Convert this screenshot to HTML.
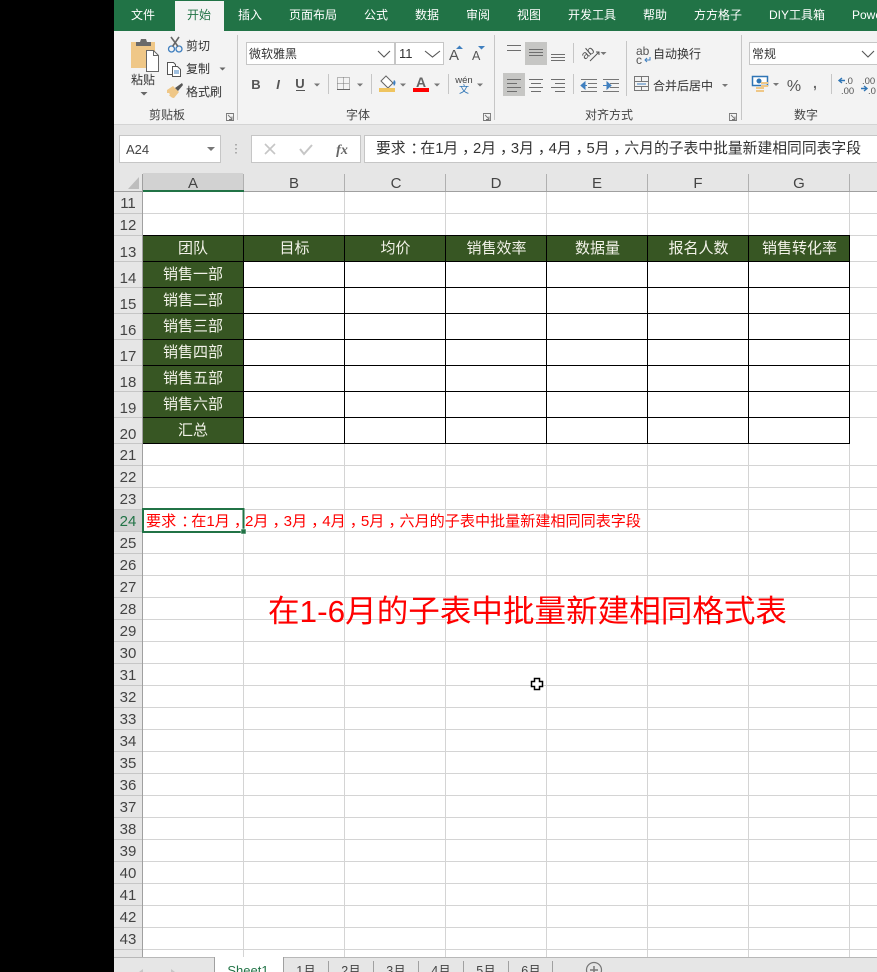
<!DOCTYPE html>
<html lang="zh"><head><meta charset="utf-8"><title>Excel</title>
<style>
html,body{margin:0;padding:0;background:#000;width:877px;height:972px;overflow:hidden}
svg{display:block;position:absolute;left:0;top:0}
text{font-family:"Liberation Sans","Noto Sans CJK SC",sans-serif}
.tab{font-size:12px;fill:#fff;text-anchor:middle}
.r{font-size:12px;fill:#333}
.g{font-size:12px;fill:#444;text-anchor:middle}
.rn{font-size:15px;fill:#444;text-anchor:middle}
.cn{font-size:15px;fill:#444;text-anchor:middle}
.th{font-size:15px;fill:#f2f2e8;text-anchor:middle}
.st{font-size:12.5px;fill:#444;text-anchor:middle}
</style></head><body>
<svg width="877" height="972" viewBox="0 0 877 972" xmlns="http://www.w3.org/2000/svg">
<rect width="877" height="972" fill="#000"/>
<rect x="114" width="763" height="972" fill="#fff"/>
<!-- title tabs -->
<rect x="114" y="0" width="763" height="31" fill="#217346"/>
<rect x="175" y="1" width="49" height="31" fill="#f3f3f3"/>
<text class="tab" x="143" y="19">文件</text>
<text class="tab" x="199" y="19" style="fill:#217346">开始</text>
<text class="tab" x="250" y="19">插入</text>
<text class="tab" x="313" y="19">页面布局</text>
<text class="tab" x="376" y="19">公式</text>
<text class="tab" x="427" y="19">数据</text>
<text class="tab" x="478" y="19">审阅</text>
<text class="tab" x="529" y="19">视图</text>
<text class="tab" x="592" y="19">开发工具</text>
<text class="tab" x="655" y="19">帮助</text>
<text class="tab" x="718" y="19">方方格子</text>
<text class="tab" x="797" y="19">DIY工具箱</text>
<text class="tab" x="852" y="19" style="text-anchor:start">Power</text>
<!-- ribbon -->
<rect x="114" y="31" width="763" height="93" fill="#f3f3f3"/>
<rect x="114" y="124" width="763" height="1.5" fill="#d4d4d4"/>
<path d="M237.5 35V120M494.5 35V120M741.5 35V120" stroke="#c6c6c6" fill="none"/>
<!-- clipboard -->
<path d="M131 42h24v26h-24z" fill="#efc787"/>
<path d="M136 42h4l1-3h5l1 3h4v4h-15z" fill="#6a6a6a"/>
<path d="M146.5 50.5h7l5 5v16h-12z" fill="#fff" stroke="#666"/>
<path d="M153.5 50.5v5h5" fill="none" stroke="#666"/>
<text x="143" y="84" style="font-size:12px;fill:#333;text-anchor:middle">粘贴</text>
<path d="M140.5 92h7l-3.500 3.500z" fill="#666"/>
<circle cx="171.500" cy="49" r="3" fill="none" stroke="#3f7fbf" stroke-width="1.300"/><circle cx="179" cy="49" r="3" fill="none" stroke="#3f7fbf" stroke-width="1.300"/>
<path d="M172.500 46.500L179 37M178 46.500L171 37" stroke="#666" stroke-width="1.600" fill="none"/>
<text class="r" x="186" y="50">剪切</text>
<path d="M167.500 62.500h6l2 2v10h-8z" fill="#fff" stroke="#555"/><path d="M172.500 66.500h5l3 3v7h-8z" fill="#fff" stroke="#555"/>
<path d="M174 71h5M174 73h5" stroke="#3f7fbf"/>
<text class="r" x="186" y="73">复制</text>
<path d="M219.500 67.500h6l-3 3z" fill="#666"/>
<path d="M167 90l6-4 6 6-5 6c-2 0-3-1-4-2l-1 0c1-1 1-2 0-3l-2 0z" fill="#efc787"/>
<path d="M175 88l7-5 1 2-5 6z" fill="#555"/>
<text class="r" x="186" y="96">格式刷</text>
<text class="g" x="167" y="119">剪贴板</text>
<path d="M226.500 113.500h7v7h-7zM228 115l4 4M232 116.500v3h-3" fill="none" stroke="#777" stroke-width=".9"/>
<!-- font -->
<rect x="246.500" y="42.500" width="148" height="22" fill="#fff" stroke="#c6c6c6"/>
<rect x="395.500" y="42.500" width="48" height="22" fill="#fff" stroke="#c6c6c6"/>
<text class="r" x="249" y="58">微软雅黑</text>
<text x="399" y="58" style="font-size:13px;fill:#333">11</text>
<path d="M378 51l6 6 6-6M425 51l7.500 6 7.500-6" fill="none" stroke="#555" stroke-width="1.100"/>
<text x="449" y="60" style="font-size:15px;fill:#555">A</text>
<text x="472" y="60" style="font-size:12.500px;fill:#555">A</text>
<path d="M456 49l3.500-3.500 3.500 3.500zM478 46h7l-3.500 3.500z" fill="#3f7fbf"/>
<text x="256" y="89" style="font-size:13px;font-weight:bold;fill:#555;text-anchor:middle">B</text>
<text x="278" y="89" style="font-size:13px;font-weight:bold;font-style:italic;fill:#555;text-anchor:middle">I</text>
<text x="300" y="88" style="font-size:13px;font-weight:bold;fill:#555;text-anchor:middle">U</text>
<path d="M296 90.500h9" stroke="#555"/>
<path d="M314 83.500h6l-3 3zM357 83.500h6l-3 3zM400 83.500h6l-3 3zM434 83.500h6l-3 3zM477 83.500h6l-3 3z" fill="#777"/>
<path d="M328.500 74V94M371.500 74V94M448.500 74V94" stroke="#c6c6c6"/>
<path d="M337.500 77.500h12v12h-12zM343.500 77.500v12M337.500 83.500h12" fill="none" stroke="#777" stroke-dasharray="1 1"/>
<path d="M337 89.500h13" stroke="#666"/>
<path d="M386 76l7 7-5 5-7-7z" fill="#fff" stroke="#666"/><path d="M394 80c2 1 2 4 0 6l-1-3z" fill="#3f7fbf"/>
<rect x="379" y="88" width="16" height="4" fill="#efc45f"/>
<text x="421" y="87" style="font-size:14px;font-weight:bold;fill:#666;text-anchor:middle">A</text>
<rect x="413" y="88" width="16" height="4" fill="#f00"/>
<text x="464" y="83" style="font-size:9.500px;fill:#444;text-anchor:middle">wén</text>
<text x="464" y="93" style="font-size:10px;fill:#2f75b5;text-anchor:middle">文</text>
<text class="g" x="358" y="119">字体</text>
<path d="M483.500 113.500h7v7h-7zM485 115l4 4M489 116.500v3h-3" fill="none" stroke="#777" stroke-width=".9"/>
<!-- alignment -->
<rect x="525" y="42" width="22" height="23" fill="#c6c6c4"/>
<rect x="503" y="73" width="22" height="23" fill="#c6c6c4"/>
<path d="M507 45.500h14M507 50.500h14" stroke="#6e6e6e" fill="none"/>
<path d="M529 49.500h14M529 52.500h14M529 55.500h14" stroke="#6e6e6e" fill="none"/>
<path d="M551 54.500h14M551 57.500h14M551 60.500h14" stroke="#6e6e6e" fill="none"/>
<path d="M507 79.500h14M507 83.500h10M507 87.500h14M507 91.500h10" stroke="#6e6e6e" fill="none"/>
<path d="M529 79.500h14M531 83.500h10M529 87.500h14M531 91.500h10" stroke="#6e6e6e" fill="none"/>
<path d="M551 79.500h14M555 83.500h10M551 87.500h14M555 91.500h10" stroke="#6e6e6e" fill="none"/>
<path d="M573.500 43V63M573.500 74V94M626.500 41V96" stroke="#c6c6c6"/>
<text transform="translate(585 60) rotate(-40)" style="font-size:12px;fill:#555">ab</text>
<path d="M590 61l9-9M596 52h3v3" stroke="#555" fill="none"/>
<path d="M600.500 52h6l-3 3z" fill="#777"/>
<path d="M581 79.500h16M588 83.500h9M588 87.500h9M581 91.500h16" stroke="#777" fill="none"/>
<path d="M581 85.500h6M585 82v7l-4-3.500z" fill="#3f7fbf" stroke="#3f7fbf"/>
<path d="M603 79.500h16M610 83.500h9M610 87.500h9M603 91.500h16" stroke="#777" fill="none"/>
<path d="M603 85.500h6M607 82v7l4-3.500z" fill="#3f7fbf" stroke="#3f7fbf"/>
<text x="636" y="55" style="font-size:12px;fill:#555">ab</text>
<text x="636" y="64" style="font-size:12px;fill:#555">c</text>
<path d="M650 57v3h-5M647 58l-2 2 2 2" fill="none" stroke="#3f7fbf"/>
<text class="r" x="653" y="58">自动换行</text>
<path d="M634.500 76.500h14v14h-14zM634.500 81.500h14M634.500 86.500h14M641.500 76.500v5M641.500 86.500v4" fill="none" stroke="#777"/>
<path d="M637 84h9" stroke="#3f7fbf"/>
<text class="r" x="653" y="90">合并后居中</text>
<path d="M722 84h6l-3 3z" fill="#777"/>
<text class="g" x="609" y="119">对齐方式</text>
<path d="M729.500 113.500h7v7h-7zM731 115l4 4M735 116.500v3h-3" fill="none" stroke="#777" stroke-width=".9"/>
<!-- number -->
<rect x="749.500" y="42.500" width="130" height="22" fill="#fff" stroke="#c6c6c6"/>
<text class="r" x="752" y="58">常规</text>
<path d="M862 51l6 6 6-6" fill="none" stroke="#555" stroke-width="1.100"/>
<rect x="752.500" y="76.500" width="15" height="9" fill="#fff" stroke="#2f75b5" stroke-width="1.500"/>
<circle cx="759" cy="81" r="2.500" fill="#2f75b5"/>
<path d="M756 88h8M756 91h8" stroke="#efc787" stroke-width="2"/><path d="M761 83h7M761 86h7" stroke="#efc787" stroke-width="2"/>
<path d="M773 83h6l-3 3z" fill="#777"/>
<text x="794" y="91" style="font-size:16px;fill:#555;text-anchor:middle">%</text>
<text x="815" y="88" style="font-size:14px;font-weight:bold;fill:#666;text-anchor:middle">,</text>
<path d="M831.500 74V94" stroke="#c6c6c6"/>
<path d="M839 80.500h6M842 78l-3 2.500 3 2.500" fill="none" stroke="#2f75b5" stroke-width="1.400"/>
<text x="845" y="84" style="font-size:9.500px;fill:#555">.0</text>
<text x="841" y="94" style="font-size:9.500px;fill:#555">.00</text>
<text x="862" y="84" style="font-size:9.500px;fill:#555">.00</text>
<path d="M861 88.500h6M864 86l3 2.500-3 2.500" fill="none" stroke="#2f75b5" stroke-width="1.400"/>
<text x="868" y="94" style="font-size:9.500px;fill:#555">.0</text>
<text class="g" x="806" y="119">数字</text>
<!-- formula bar -->
<rect x="114" y="125" width="763" height="48" fill="#e6e6e6"/>
<rect x="119.500" y="135.500" width="101" height="27" fill="#fff" stroke="#c6c6c6"/>
<text x="126" y="154" style="font-size:13px;fill:#444">A24</text>
<path d="M207 147h8l-4 4z" fill="#777"/>
<path d="M236 144v1.500M236 148v1.500M236 152v1.500" stroke="#999" stroke-width="1.500"/>
<rect x="251.500" y="135.500" width="109" height="27" fill="#fff" stroke="#c6c6c6"/>
<path d="M265 144l10 10M275 144l-10 10" stroke="#c6c6c6" stroke-width="1.600"/>
<path d="M300 149l4 5 8-9" fill="none" stroke="#c6c6c6" stroke-width="2"/>
<text x="342" y="154" style="font-family:'Liberation Serif',serif;font-size:14px;font-style:italic;font-weight:bold;fill:#666;text-anchor:middle">fx</text>
<rect x="364.500" y="135.500" width="520" height="27" fill="#fff" stroke="#c6c6c6"/>
<text x="376" y="153" textLength="485" lengthAdjust="spacingAndGlyphs" style="font-size:15px;fill:#333">要求<tspan dx="5">：</tspan><tspan dx="-5">在</tspan>1月<tspan dx="4">，</tspan><tspan dx="-4">2</tspan>月<tspan dx="4">，</tspan><tspan dx="-4">3</tspan>月<tspan dx="4">，</tspan><tspan dx="-4">4</tspan>月<tspan dx="4">，</tspan><tspan dx="-4">5</tspan>月<tspan dx="4">，</tspan><tspan dx="-4">六</tspan>月的子表中批量新建相同同表字段</text>
<!-- headers -->
<rect x="114" y="173" width="763" height="19" fill="#e6e6e6"/>
<rect x="114" y="192" width="28" height="765" fill="#e6e6e6"/>
<rect x="143" y="173" width="100" height="18" fill="#d2d2d2"/>
<rect x="114" y="510" width="28" height="21" fill="#d2d2d2"/>
<path d="M139 177v12h-11z" fill="#bdbdbd"/>
<path d="M243.500 174V191M344.500 174V191M445.500 174V191M546.500 174V191M647.500 174V191M748.500 174V191M849.500 174V191" stroke="#b0b0b0"/>
<path d="M114 191.500H877M142.500 174V957" stroke="#a0a0a0"/>
<rect x="143" y="190" width="101" height="2" fill="#217346"/>
<text class="cn" x="193" y="188">A</text><text class="cn" x="294" y="188">B</text><text class="cn" x="396" y="188">C</text><text class="cn" x="496" y="188">D</text><text class="cn" x="597" y="188">E</text><text class="cn" x="698" y="188">F</text><text class="cn" x="799" y="188">G</text>
<!-- grid -->
<path d="M143 213.500H877M143 235.500H877M850 261.500H877M850 287.500H877M850 313.500H877M850 339.500H877M850 365.500H877M850 391.500H877M850 417.500H877M143 465.500H877M143 487.500H877M143 509.500H877M143 531.500H877M143 553.500H877M143 575.500H877M143 597.500H877M143 619.500H877M143 641.500H877M143 663.500H877M143 685.500H877M143 707.500H877M143 729.500H877M143 751.500H877M143 773.500H877M143 795.500H877M143 817.500H877M143 839.500H877M143 861.500H877M143 883.500H877M143 905.500H877M143 927.500H877M143 949.500H877M243.500 192V957M344.500 192V957M445.500 192V957M546.500 192V957M647.500 192V957M748.500 192V957M849.500 192V957" stroke="#d4d4d4" fill="none"/>
<path d="M114 213.500h28M114 235.500h28M114 261.500h28M114 287.500h28M114 313.500h28M114 339.500h28M114 365.500h28M114 391.500h28M114 417.500h28M114 443.500h28M114 465.500h28M114 487.500h28M114 509.500h28M114 531.500h28M114 553.500h28M114 575.500h28M114 597.500h28M114 619.500h28M114 641.500h28M114 663.500h28M114 685.500h28M114 707.500h28M114 729.500h28M114 751.500h28M114 773.500h28M114 795.500h28M114 817.500h28M114 839.500h28M114 861.500h28M114 883.500h28M114 905.500h28M114 927.500h28M114 949.500h28" stroke="#c6c6c6"/>
<!-- row numbers -->
<text class="rn" x="128" y="208">11</text><text class="rn" x="128" y="230">12</text><text class="rn" x="128" y="257">13</text><text class="rn" x="128" y="283">14</text><text class="rn" x="128" y="309">15</text><text class="rn" x="128" y="335">16</text><text class="rn" x="128" y="361">17</text><text class="rn" x="128" y="387">18</text><text class="rn" x="128" y="413">19</text><text class="rn" x="128" y="439">20</text><text class="rn" x="128" y="460">21</text><text class="rn" x="128" y="482">22</text><text class="rn" x="128" y="504">23</text><text class="rn" x="128" y="526" style="fill:#217346">24</text><text class="rn" x="128" y="548">25</text><text class="rn" x="128" y="570">26</text><text class="rn" x="128" y="592">27</text><text class="rn" x="128" y="614">28</text><text class="rn" x="128" y="636">29</text><text class="rn" x="128" y="658">30</text><text class="rn" x="128" y="680">31</text><text class="rn" x="128" y="702">32</text><text class="rn" x="128" y="724">33</text><text class="rn" x="128" y="746">34</text><text class="rn" x="128" y="768">35</text><text class="rn" x="128" y="790">36</text><text class="rn" x="128" y="812">37</text><text class="rn" x="128" y="834">38</text><text class="rn" x="128" y="856">39</text><text class="rn" x="128" y="878">40</text><text class="rn" x="128" y="900">41</text><text class="rn" x="128" y="922">42</text><text class="rn" x="128" y="944">43</text>
<!-- table -->
<rect x="143" y="235" width="101" height="208" fill="#375623"/>
<rect x="244" y="235" width="606" height="26" fill="#375623"/>
<path d="M143 235.500H850M143 261.500H850M143 287.500H850M143 313.500H850M143 339.500H850M143 365.500H850M143 391.500H850M143 417.500H850M143 443.500H850M243.500 235V444M344.500 235V444M445.500 235V444M546.500 235V444M647.500 235V444M748.500 235V444M849.500 235V444" stroke="#000" fill="none"/>
<text class="th" x="193" y="253">团队</text><text class="th" x="294.500" y="253">目标</text><text class="th" x="395.500" y="253">均价</text><text class="th" x="496.500" y="253">销售效率</text><text class="th" x="597.500" y="253">数据量</text><text class="th" x="698.500" y="253">报名人数</text><text class="th" x="799.500" y="253">销售转化率</text>
<text class="th" x="193" y="279">销售一部</text><text class="th" x="193" y="305">销售二部</text><text class="th" x="193" y="331">销售三部</text><text class="th" x="193" y="357">销售四部</text><text class="th" x="193" y="383">销售五部</text><text class="th" x="193" y="409">销售六部</text><text class="th" x="193" y="435">汇总</text>
<!-- red text -->
<text x="146" y="526" textLength="495" lengthAdjust="spacingAndGlyphs" style="font-size:15px;fill:#f00">要求<tspan dx="5">：</tspan><tspan dx="-5">在</tspan>1月<tspan dx="4">，</tspan><tspan dx="-4">2</tspan>月<tspan dx="4">，</tspan><tspan dx="-4">3</tspan>月<tspan dx="4">，</tspan><tspan dx="-4">4</tspan>月<tspan dx="4">，</tspan><tspan dx="-4">5</tspan>月<tspan dx="4">，</tspan><tspan dx="-4">六</tspan>月的子表中批量新建相同同表字段</text>
<rect x="143" y="509" width="100.500" height="23" fill="none" stroke="#217346" stroke-width="2"/>
<rect x="241" y="529" width="5" height="5" fill="#217346" stroke="#fff" stroke-width=".5"/>
<text x="268" y="622" textLength="519" lengthAdjust="spacingAndGlyphs" style="font-size:31px;fill:#f00">在1-6月的子表中批量新建相同格式表</text>
<!-- cursor -->
<path d="M534.500 678.500h5v3h3v5h-3v3h-5v-3h-3v-5h3z" fill="#fff" stroke="#000" stroke-width="1.500"/>
<!-- sheet tabs -->
<rect x="114" y="957" width="763" height="15" fill="#e6e6e6"/>
<path d="M114 957.500H877" stroke="#b8b8b8"/>
<rect x="215" y="957" width="68" height="15" fill="#fff"/>
<path d="M214.500 957V972M283.500 957V972" stroke="#a0a0a0"/>
<path d="M328.500 961V972M373.500 961V972M418.500 961V972M463.500 961V972M508.500 961V972M552.500 961V972" stroke="#a0a0a0"/>
<path d="M143 969l-4 3h4zM171 969l4 3h-4z" fill="#c6c6c6"/>
<text class="st" x="248" y="975" style="fill:#217346;font-size:13px">Sheet1</text>
<text class="st" x="306" y="975">1月</text><text class="st" x="351" y="975">2月</text><text class="st" x="396" y="975">3月</text><text class="st" x="441" y="975">4月</text><text class="st" x="486" y="975">5月</text><text class="st" x="531" y="975">6月</text>
<circle cx="594" cy="970" r="7.500" fill="none" stroke="#777" stroke-width="1.200"/>
<path d="M590 970h8M594 966v8" stroke="#777" stroke-width="1.500"/>
</svg>
</body></html>
